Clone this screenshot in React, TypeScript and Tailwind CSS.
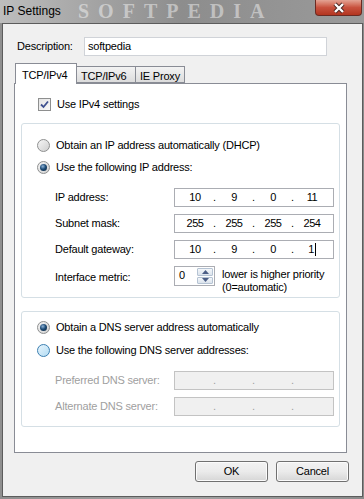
import React from 'react';

const Radio = ({ checked = false, hover = false }: { checked?: boolean; hover?: boolean }) => (
  <span
    className={
      hover
        ? 'w-[13px] h-[13px] rounded-full border border-[#3c7fb1] bg-gradient-to-br from-[#e8f5fd] to-[#b3dcf3] flex items-center justify-center shrink-0'
        : 'w-[13px] h-[13px] rounded-full border border-[#8e8f8f] bg-gradient-to-br from-[#f6f6f6] to-[#cfcfcf] flex items-center justify-center shrink-0'
    }
  >
    {checked && (
      <span className="w-[7px] h-[7px] rounded-full bg-[radial-gradient(circle_at_40%_35%,#8fb3d6_0%,#1d4c78_45%,#0b1f33_100%)]" />
    )}
  </span>
);

const Checkbox = () => (
  <span className="w-[13px] h-[13px] border border-[#8e8f8f] bg-gradient-to-br from-[#e4e4e4] to-[#f8f8f8] flex items-center justify-center shrink-0">
    <svg width="9" height="9" viewBox="0 0 9 9">
      <path d="M1 4.5 L3.5 7 L8 1.5" fill="none" stroke="#3e508f" strokeWidth="1.8" />
    </svg>
  </span>
);

const IpBox = ({ parts, disabled = false, caret = false }: { parts: string[]; disabled?: boolean; caret?: boolean }) => (
  <div
    className={
      disabled
        ? 'w-[160px] h-[19px] border border-[#c3c3c3] bg-[#f0f0f0] flex items-center pl-[5px] text-[#a0a0a0]'
        : 'w-[160px] h-[19px] border border-[#abadb3] bg-white flex items-center pl-[5px] text-black'
    }
  >
    {parts.map((p, i) => (
      <React.Fragment key={i}>
        {i > 0 && <span className="w-[9px] text-center">.</span>}
        <span className="w-[30px] text-center tracking-[-0.4px] relative">
          {p}
          {caret && i === 3 && <span className="inline-block w-px h-[13px] bg-black align-middle ml-[1px]" />}
        </span>
      </React.Fragment>
    ))}
  </div>
);

const Row = ({ label, children, disabled = false }: { label: string; children: React.ReactNode; disabled?: boolean }) => (
  <div className="flex items-center">
    <span className={disabled ? 'w-[152px] pl-[33px] text-[#a0a0a0]' : 'w-[152px] pl-[33px]'}>{label}</span>
    {children}
  </div>
);

const Button = ({ children }: { children: React.ReactNode }) => (
  <button className="w-[73px] h-[21px] rounded-[3px] border border-[#707070] bg-gradient-to-b from-[#f2f2f2] via-[#ebebeb] to-[#d6d6d6] shadow-[inset_0_0_0_1px_#fbfbfb] text-[11px]">
    {children}
  </button>
);

export default function App() {
  return (
    <div className="w-[364px] h-[499px] bg-gradient-to-r from-[#8f8f8f] via-[#a4a4a4] to-[#8a8a8a] font-['Liberation_Sans',Arial,sans-serif] text-[11px] tracking-[-0.2px] text-black flex flex-col overflow-hidden">
      {/* title bar */}
      <div className="h-[23px] relative flex items-start justify-between bg-gradient-to-r from-[#bdbdbd] via-[#8d8d8d] to-[#9a9a9a]">
        <span className="pl-[3px] pt-[2px] text-[12px] tracking-normal relative z-10">IP Settings</span>
        <span className="absolute left-[78px] top-0 font-['Liberation_Serif',serif] font-bold text-[20px] leading-[23px] tracking-[9px] text-white/45">
          SOFTPEDIA
        </span>
        <div className="w-[47px] h-[16px] mr-[2px] rounded-b-[4px] border border-t-0 border-[#6b2a22] bg-gradient-to-b from-[#e3a394] via-[#c8513e] to-[#b3351f] flex items-center justify-center relative z-10">
          <svg width="14" height="12" viewBox="0 0 14 12">
            <path d="M3 2 L11 10 M11 2 L3 10" stroke="#4a2420" strokeWidth="4.2" />
            <path d="M3 2 L11 10 M11 2 L3 10" stroke="#ffffff" strokeWidth="2.4" />
          </svg>
        </div>
      </div>

      {/* client area */}
      <div className="ml-[2px] w-[361px] h-[474px] border border-[#5c5c5c] bg-[#f0f0f0] flex flex-col">
        <div className="flex items-center mt-[13px] pl-[14px]">
          <span className="w-[67px]">Description:</span>
          <div className="w-[243px] h-[19px] border border-[#d0d3d8] bg-white flex items-center pl-[3px]">softpedia</div>
        </div>

        {/* tabs */}
        <div className="flex items-end mt-[7px] pl-[12px] h-[20px] relative z-10">
          <div className="w-[62px] h-[21px] border border-b-0 border-[#898c95] bg-white pl-[6px] pt-[3px] mb-[-1px]">TCP/IPv4</div>
          <div className="w-[59px] h-[17px] border border-l-0 border-[#898c95] bg-gradient-to-b from-[#f3f3f3] to-[#dcdcdc] pl-[4px] pt-[1px]">TCP/IPv6</div>
          <div className="w-[49px] h-[17px] border border-l-0 border-[#898c95] bg-gradient-to-b from-[#f3f3f3] to-[#dcdcdc] pl-[4px] pt-[1px]">IE Proxy</div>
        </div>

        {/* panel */}
        <div className="ml-[11px] w-[333px] h-[370px] border border-[#898c95] bg-white flex flex-col">
          <div className="flex items-center gap-[6px] mt-[12px] pl-[23px]">
            <Checkbox />
            <span>Use IPv4 settings</span>
          </div>

          <div className="ml-[6px] mt-[10px] w-[319px] h-[175px] rounded-[3px] border border-[#d5dfe5] flex flex-col">
            <div className="flex items-center gap-[6px] pl-[15px] mt-[14px] h-[16px]">
              <Radio />
              <span>Obtain an IP address automatically (DHCP)</span>
            </div>
            <div className="flex items-center gap-[6px] pl-[15px] mt-[6px] h-[16px]">
              <Radio checked />
              <span>Use the following IP address:</span>
            </div>
            <div className="mt-[12px] flex flex-col gap-[7px]">
              <Row label="IP address:">
                <IpBox parts={['10', '9', '0', '11']} />
              </Row>
              <Row label="Subnet mask:">
                <IpBox parts={['255', '255', '255', '254']} />
              </Row>
              <Row label="Default gateway:">
                <IpBox parts={['10', '9', '0', '1']} caret />
              </Row>
              <div className="flex items-start">
                <span className="w-[152px] pl-[33px] pt-[3px]">Interface metric:</span>
                <div className="w-[41px] h-[20px] border border-[#abadb3] bg-white flex items-center justify-between pl-[4px] pr-[1px]">
                  <span>0</span>
                  <div className="w-[16px] h-[16px] flex flex-col gap-px">
                    <div className="h-[8px] rounded-[1px] border border-[#b5c3d3] bg-gradient-to-b from-[#f4f7fa] to-[#dbe3ec] flex items-center justify-center">
                      <svg width="7" height="4" viewBox="0 0 7 4">
                        <path d="M0 4 L3.5 0 L7 4 Z" fill="#4b5e86" />
                      </svg>
                    </div>
                    <div className="h-[7px] rounded-[1px] border border-[#b5c3d3] bg-gradient-to-b from-[#f4f7fa] to-[#dbe3ec] flex items-center justify-center">
                      <svg width="7" height="4" viewBox="0 0 7 4">
                        <path d="M0 0 L3.5 4 L7 0 Z" fill="#4b5e86" />
                      </svg>
                    </div>
                  </div>
                </div>
                <div className="ml-[7px] pt-[2px] leading-[13px]">
                  <div>lower is higher priority</div>
                  <div>(0=automatic)</div>
                </div>
              </div>
            </div>
          </div>

          <div className="ml-[6px] mt-[13px] w-[319px] h-[116px] rounded-[3px] border border-[#d5dfe5] flex flex-col">
            <div className="flex items-center gap-[6px] pl-[15px] mt-[8px] h-[16px]">
              <Radio checked />
              <span>Obtain a DNS server address automatically</span>
            </div>
            <div className="flex items-center gap-[6px] pl-[15px] mt-[7px] h-[16px]">
              <Radio hover />
              <span>Use the following DNS server addresses:</span>
            </div>
            <div className="mt-[12px] flex flex-col gap-[7px]">
              <Row label="Preferred DNS server:" disabled>
                <IpBox parts={['', '', '', '']} disabled />
              </Row>
              <Row label="Alternate DNS server:" disabled>
                <IpBox parts={['', '', '', '']} disabled />
              </Row>
            </div>
          </div>
        </div>

        <div className="flex justify-end gap-[8px] mt-[8px] pr-[13px]">
          <Button>OK</Button>
          <Button>Cancel</Button>
        </div>
      </div>
    </div>
  );
}
